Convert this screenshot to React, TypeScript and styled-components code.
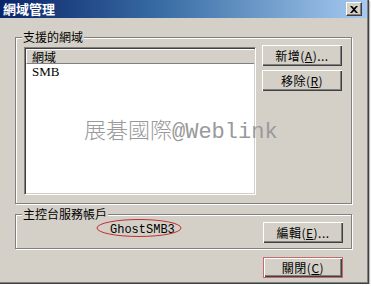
import React from "react";
import styled, { createGlobalStyle } from "styled-components";

const Global = createGlobalStyle`
  html, body { margin: 0; padding: 0; background: #ffffff; }
  body { font-family: "Noto Sans CJK TC", "Liberation Sans", sans-serif; }
`;

const Win = styled.div`
  position: relative;
  width: 369px;
  height: 284px;
  box-sizing: border-box;
  background: #d4d0c8;
  border-right: 1px solid #404040;
  border-bottom: 1px solid #404040;
  box-shadow: inset -1px -1px 0 #808080, 1px 1px 1px rgba(0,0,0,0.25);
  display: flex;
  flex-direction: column;
  overflow: hidden;
`;

const TitleBar = styled.div`
  height: 18px;
  margin-right: 1px;
  background: linear-gradient(90deg, #0a246a 0%, #3a6ea5 45%, #a6caf0 100%);
  display: flex;
  align-items: center;
  justify-content: space-between;
  padding: 0 5px 0 3px;
`;

const Title = styled.span`
  color: #ffffff;
  font-weight: bold;
  font-size: 13px;
  line-height: 18px;
`;

const CloseBox = styled.div`
  width: 16px;
  height: 14px;
  box-sizing: border-box;
  background: #d4d0c8;
  border-top: 1px solid #ffffff;
  border-left: 1px solid #ffffff;
  border-right: 1px solid #404040;
  border-bottom: 1px solid #404040;
  box-shadow: inset -1px -1px 0 #808080;
  display: flex;
  align-items: center;
  justify-content: center;
`;

const Body = styled.div`
  padding: 19px 16px 0 15px;
  display: flex;
  flex-direction: column;
`;

const Group = styled.div<{ $h: number; $pt: number }>`
  position: relative;
  height: ${(p) => p.$h}px;
  box-sizing: border-box;
  border: 1px solid #808080;
  box-shadow: inset 1px 1px 0 #ffffff, 1px 1px 0 #ffffff;
  padding: ${(p) => p.$pt}px 8px 0 8px;
  display: flex;
  gap: 6px;
`;

const Spacer = styled.div`
  height: 10px;
`;

const Legend = styled.span`
  position: absolute;
  top: -8px;
  left: 6px;
  padding: 0 1px;
  background: #d4d0c8;
  font-size: 12px;
  line-height: 14px;
  color: #000;
`;

const ListBox = styled.div`
  width: 232px;
  height: 148px;
  margin-top: 2px;
  box-sizing: border-box;
  background: #ffffff;
  border-top: 1px solid #808080;
  border-left: 1px solid #808080;
  border-right: 1px solid #ffffff;
  border-bottom: 1px solid #ffffff;
  box-shadow: inset 1px 1px 0 #404040, inset -1px -1px 0 #d4d0c8;
  padding: 1px 1px;
  display: flex;
  flex-direction: column;
`;

const ListHeader = styled.div`
  height: 15px;
  box-sizing: border-box;
  background: #d4d0c8;
  border-top: 1px solid #ffffff;
  border-left: 1px solid #ffffff;
  border-bottom: 1px solid #808080;
  padding-left: 5px;
  font-size: 12px;
  line-height: 13px;
  color: #000;
`;

const ListRow = styled.div`
  height: 14px;
  padding-left: 6px;
  font-family: "Liberation Serif", "Noto Sans CJK TC", serif;
  font-size: 13px;
  line-height: 15px;
  color: #000;
`;

const ButtonCol = styled.div`
  display: flex;
  flex-direction: column;
  gap: 4px;
`;

const Btn = styled.button<{ $focus?: boolean }>`
  width: 80px;
  height: 21px;
  box-sizing: border-box;
  padding: 0;
  margin: 0;
  background: #d4d0c8;
  font-family: "Noto Sans CJK TC", "Liberation Sans", sans-serif;
  font-size: 12px;
  line-height: 17px;
  color: #000;
  border: none;
  box-shadow: ${(p) =>
    p.$focus
      ? "inset 0 0 0 1px #c46a6a, inset 1px 1px 0 1px #ffffff, inset -1px -1px 0 1px #404040, inset -2px -2px 0 1px #808080"
      : "inset 1px 1px 0 #ffffff, inset -1px -1px 0 #404040, inset -2px -2px 0 #808080"};
  outline: none;
  display: flex;
  align-items: center;
  justify-content: center;
  letter-spacing: 0.5px;
`;

const Key = styled.span`
  text-decoration: underline;
`;

const Row = styled.div`
  display: flex;
  align-items: flex-start;
  width: 100%;
`;

const AccountArea = styled.div`
  flex: 1;
  display: flex;
  padding-left: 86px;
  padding-top: 1px;
`;

const Account = styled.span`
  position: relative;
  font-family: "Liberation Mono", monospace;
  font-size: 12px;
  line-height: 14px;
  color: #000;
`;

const Ellipse = styled.svg`
  position: absolute;
  left: -13px;
  top: -4px;
  overflow: visible;
`;

const Footer = styled.div`
  display: flex;
  justify-content: flex-end;
  padding-right: 9px;
  margin-top: 8px;
`;

const Watermark = styled.div`
  position: absolute;
  left: 84px;
  top: 120px;
  font-family: "Liberation Mono", "Noto Sans CJK TC", monospace;
  font-size: 22px;
  font-weight: 300;
  line-height: 26px;
  color: #9a9a9a;
  white-space: nowrap;
  pointer-events: none;
`;

export default function App() {
  return (
    <>
      <Global />
      <Win>
        <TitleBar>
          <Title>網域管理</Title>
          <CloseBox>
            <svg width="8" height="7" viewBox="0 0 8 7">
              <path d="M0 0 L2 0 L4 2 L6 0 L8 0 L5 3.5 L8 7 L6 7 L4 5 L2 7 L0 7 L3 3.5 Z" fill="#000" />
            </svg>
          </CloseBox>
        </TitleBar>
        <Body>
          <Group $h={167} $pt={7}>
            <Legend>支援的網域</Legend>
            <ListBox>
              <ListHeader>網域</ListHeader>
              <ListRow>SMB</ListRow>
            </ListBox>
            <ButtonCol>
              <Btn>
                新增(<Key>A</Key>)...
              </Btn>
              <Btn>
                移除(<Key>R</Key>)
              </Btn>
            </ButtonCol>
          </Group>
          <Spacer />
          <Group $h={35} $pt={7}>
            <Legend>主控台服務帳戶</Legend>
            <Row>
              <AccountArea>
                <Account>
                  GhostSMB3
                  <Ellipse width="84" height="18">
                    <ellipse cx="42" cy="9" rx="42" ry="8.5" fill="none" stroke="#c03030" strokeWidth="1" />
                  </Ellipse>
                </Account>
              </AccountArea>
              <Btn>
                編輯(<Key>E</Key>)...
              </Btn>
            </Row>
          </Group>
          <Footer>
            <Btn $focus>
              關閉(<Key>C</Key>)
            </Btn>
          </Footer>
        </Body>
        <Watermark>展碁國際@Weblink</Watermark>
      </Win>
    </>
  );
}
